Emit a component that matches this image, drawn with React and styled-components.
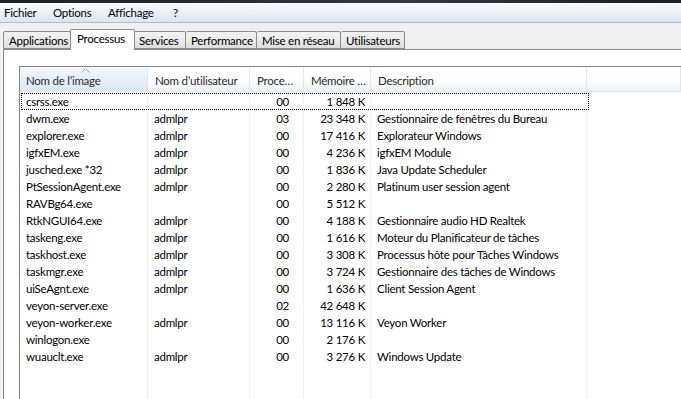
import React from 'react';
import styled, { createGlobalStyle } from 'styled-components';

const GlobalStyle = createGlobalStyle`
  html, body {
    margin: 0;
    padding: 0;
    background: #f0f0f0;
  }
  body {
    font-family: Lato, 'Noto Sans', sans-serif;
    font-size: 11.5px;
    letter-spacing: -0.25px;
    color: #000;
  }
`;

const columns = [
  { key: 'name', label: 'Nom de l’image', width: 128, sorted: true },
  { key: 'user', label: 'Nom d’utilisateur', width: 102 },
  { key: 'cpu', label: 'Proce…', width: 54, right: true, pad: 14 },
  { key: 'mem', label: 'Mémoire …', width: 67, right: true, pad: 5 },
  { key: 'desc', label: 'Description', width: 216 },
];

const processes = [
  ['csrss.exe', '', '00', '1 848 K', ''],
  ['dwm.exe', 'admlpr', '03', '23 348 K', 'Gestionnaire de fenêtres du Bureau'],
  ['explorer.exe', 'admlpr', '00', '17 416 K', 'Explorateur Windows'],
  ['igfxEM.exe', 'admlpr', '00', '4 236 K', 'igfxEM Module'],
  ['jusched.exe *32', 'admlpr', '00', '1 836 K', 'Java Update Scheduler'],
  ['PtSessionAgent.exe', 'admlpr', '00', '2 280 K', 'Platinum user session agent'],
  ['RAVBg64.exe', '', '00', '5 512 K', ''],
  ['RtkNGUI64.exe', 'admlpr', '00', '4 188 K', 'Gestionnaire audio HD Realtek'],
  ['taskeng.exe', 'admlpr', '00', '1 616 K', 'Moteur du Planificateur de tâches'],
  ['taskhost.exe', 'admlpr', '00', '3 308 K', 'Processus hôte pour Tâches Windows'],
  ['taskmgr.exe', 'admlpr', '00', '3 724 K', 'Gestionnaire des tâches de Windows'],
  ['uiSeAgnt.exe', 'admlpr', '00', '1 636 K', 'Client Session Agent'],
  ['veyon-server.exe', '', '02', '42 648 K', ''],
  ['veyon-worker.exe', 'admlpr', '00', '13 116 K', 'Veyon Worker'],
  ['winlogon.exe', '', '00', '2 176 K', ''],
  ['wuauclt.exe', 'admlpr', '00', '3 276 K', 'Windows Update'],
];

const menus = [
  { label: 'Fichier', width: 49 },
  { label: 'Options', width: 55 },
  { label: 'Affichage', width: 65 },
  { label: '?', width: 12 },
];

const tabs = [
  { label: 'Applications', width: 68 },
  { label: 'Processus', width: 65, active: true },
  { label: 'Services', width: 52 },
  { label: 'Performance', width: 71 },
  { label: 'Mise en réseau', width: 84 },
  { label: 'Utilisateurs', width: 64 },
];

const Window = styled.div`
  width: 681px;
  height: 399px;
  overflow: hidden;
  display: flex;
  flex-direction: column;
  background: #f0f0f0;
`;

const TitleEdge = styled.div`
  height: 3px;
  background: linear-gradient(90deg, #1c2228, #2e3a40 60%, #1a2024);
`;

const MenuBar = styled.div`
  height: 19px;
  display: flex;
  align-items: center;
  padding-left: 4px;
  background: linear-gradient(#fafbfd, #e9eef7 55%, #dce5f3);
  border-bottom: 1px solid #b4bac4;
`;

const MenuItem = styled.span`
  width: ${(p) => p.w}px;
  flex: none;
  color: #000;
`;

const TabStrip = styled.div`
  height: 26px;
  display: flex;
  align-items: flex-end;
  padding-left: 3px;
  position: relative;
  z-index: 1;
`;

const Tab = styled.div`
  flex: none;
  width: ${(p) => p.w}px;
  height: ${(p) => (p.active ? 21 : 18)}px;
  padding: ${(p) => (p.active ? '2px 0 0 6px' : '0 0 0 5px')};
  margin: 0 ${(p) => (p.active ? -1 : 0)}px ${(p) => (p.active ? -1 : 0)}px;
  display: flex;
  align-items: ${(p) => (p.active ? 'flex-start' : 'center')};
  box-sizing: border-box;
  border: 1px solid #898c95;
  border-bottom: ${(p) => (p.active ? 'none' : '1px solid #898c95')};
  border-left-width: ${(p) => (p.first || p.active ? 1 : 0)}px;
  background: ${(p) => (p.active ? '#fff' : 'linear-gradient(#f2f2f2, #ebebeb 50%, #dddddd)')};
  border-radius: 2px 2px 0 0;
  position: relative;
  z-index: ${(p) => (p.active ? 2 : 1)};
  white-space: nowrap;
`;

const Panel = styled.div`
  flex: 1;
  margin-left: 3px;
  background: #fff;
  border-top: 1px solid #898c95;
  border-left: 1px solid #898c95;
  padding: 16px 0 0 15px;
  min-height: 0;
`;

const ListView = styled.div`
  height: 100%;
  border-top: 1px solid #828790;
  border-left: 1px solid #828790;
  background: #fff;
  position: relative;
  overflow: hidden;
  display: flex;
  flex-direction: column;
`;

const Row = styled.div`
  display: flex;
  flex: none;
  height: ${(p) => p.h}px;
  position: relative;
`;

const HeaderCell = styled.div`
  width: ${(p) => p.w}px;
  flex: ${(p) => (p.w ? 'none' : 1)};
  box-sizing: border-box;
  padding-left: ${(p) => (p.first ? 6 : 7)}px;
  display: flex;
  align-items: center;
  padding-top: 2px;
  color: #2b2b2b;
  border-right: 1px solid #e3e6ea;
  border-bottom: 1px solid #e2e4e8;
  background: ${(p) =>
    p.sorted
      ? 'linear-gradient(#f3f8fd, #e6f0fa 45%, #dbe8f5)'
      : 'linear-gradient(#ffffff, #ffffff 45%, #f1f2f4)'};
  position: relative;
  white-space: nowrap;
`;

const SortArrow = styled.svg`
  position: absolute;
  top: 1px;
  left: 61px;
`;

const Cell = styled.div`
  width: ${(p) => p.w}px;
  flex: ${(p) => (p.w ? 'none' : 1)};
  box-sizing: border-box;
  padding-left: 6px;
  padding-right: ${(p) => p.pad || 0}px;
  text-align: ${(p) => (p.right ? 'right' : 'left')};
  line-height: 17px;
  white-space: nowrap;
  overflow: hidden;
  border-right: 1px solid #f3f3f3;
  color: #000;
`;

const Filler = styled.div`
  flex: 1;
`;

const Body = styled.div`
  display: flex;
  flex-direction: column;
  padding-top: 1px;
  flex: 1;
`;

const FocusRect = styled.div`
  position: absolute;
  left: 1px;
  top: 0;
  width: 566px;
  height: 15px;
  border: 1px dotted #000;
  pointer-events: none;
`;

const Columns = styled.div`
  display: flex;
  flex: 1;
`;

const ColumnLine = styled.div`
  width: ${(p) => p.w}px;
  flex: none;
  box-sizing: border-box;
  border-right: 1px solid #f3f3f3;
`;

function Header() {
  return (
    <Row h={25}>
      {columns.map((c, i) => (
        <HeaderCell key={c.key} w={c.width} first={i === 0} sorted={c.sorted}>
          {c.sorted && (
            <SortArrow width="9" height="5" viewBox="0 0 9 5">
              <path d="M0.5 4.5 L4.5 0.5 L8.5 4.5" fill="none" stroke="#97a5b8" strokeWidth="1" />
            </SortArrow>
          )}
          {c.label}
        </HeaderCell>
      ))}
      <HeaderCell />
    </Row>
  );
}

function App() {
  return (
    <Window>
      <GlobalStyle />
      <TitleEdge />
      <MenuBar>
        {menus.map((m) => (
          <MenuItem key={m.label} w={m.width}>
            {m.label}
          </MenuItem>
        ))}
      </MenuBar>
      <TabStrip>
        {tabs.map((t, i) => (
          <Tab key={t.label} w={t.width} active={t.active} first={i === 0}>
            {t.label}
          </Tab>
        ))}
      </TabStrip>
      <Panel>
        <ListView>
          <Header />
          <Body>
            {processes.map((p, i) => (
              <Row h={17} key={p[0]}>
                {i === 0 && <FocusRect />}
                {columns.map((c, j) => (
                  <Cell key={c.key} w={c.width} right={c.right} pad={c.pad}>
                    {p[j]}
                  </Cell>
                ))}
                <Filler />
              </Row>
            ))}
            <Columns>
              {columns.map((c) => (
                <ColumnLine key={c.key} w={c.width} />
              ))}
              <Filler />
            </Columns>
          </Body>
        </ListView>
      </Panel>
    </Window>
  );
}

export default App;
